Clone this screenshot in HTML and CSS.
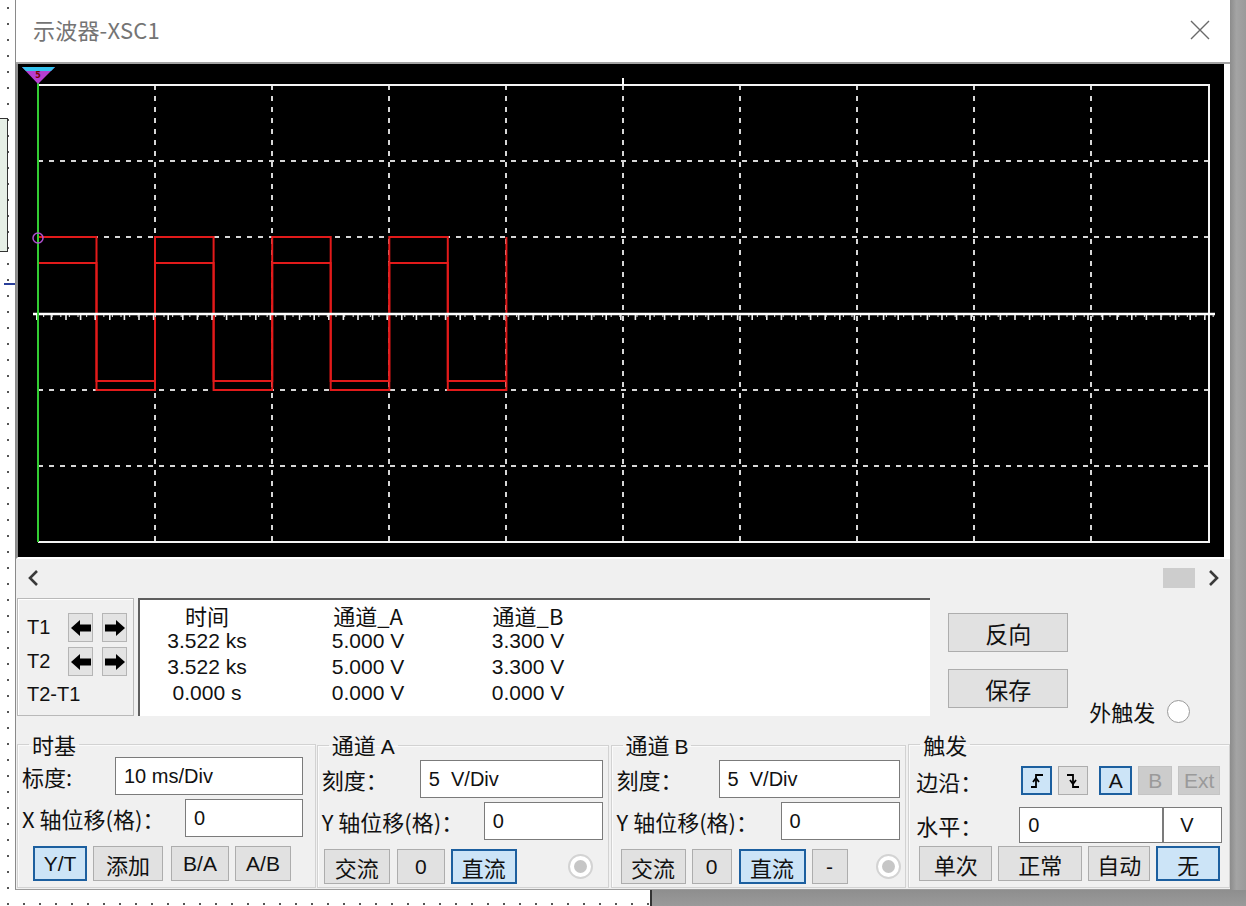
FILE: index.html
```html
<!DOCTYPE html>
<html lang="zh-CN">
<head>
<meta charset="utf-8">
<title>示波器-XSC1</title>
<link rel="stylesheet" href="styles.css">
</head>
<body>
<div class="desktop">
  <div class="left-strip">
    <div class="comp"></div>
    <div class="wire"></div>
  </div>
  <div class="window">
    <div class="titlebar">
      <span class="title">示波器-XSC1</span>
      <svg class="close" width="20" height="20" viewBox="0 0 20 20"><path d="M1 1 L19 19 M19 1 L1 19" stroke="#6a6a6a" stroke-width="1.4" fill="none"/></svg>
    </div>
    <div class="screen">
      <svg width="1206" height="493" viewBox="18 64 1206 493">
        <rect x="18" y="64" width="1206" height="493" fill="#000"/>
        <g stroke="#d6d6d6" stroke-width="2" stroke-dasharray="5 6" fill="none">
          <path d="M155 85 V542 M272 85 V542 M389 85 V542 M506 85 V542 M623 85 V542 M740 85 V542 M857 85 V542 M974 85 V542 M1091 85 V542"/>
          <path d="M38 161 H1209 M38 237 H1209 M38 390 H1209 M38 466 H1209"/>
        </g>
        <polyline points="38,85 1209,85 1209,542 38,542" stroke="#f4f4f4" stroke-width="2" fill="none"/>
        <path d="M623 78 V85" stroke="#fff" stroke-width="2"/>
        <g stroke="#e21a1a" stroke-width="2" fill="none">
          <path d="M38 237 H96.5 V390 H155 V237 H213.6 V390 H272.2 V237 H330.7 V390 H389.3 V237 H447.8 V390 H506.4 V237"/>
          <path d="M38 263 H96.5 V381 H155 V263 H213.6 V381 H272.2 V263 H330.7 V381 H389.3 V263 H447.8 V381 H506.4"/>
        </g>
        <path d="M33 314 H1215" stroke="#fff" stroke-width="2.4"/>
        <path d="M36 317.5 H1215" stroke="#ececec" stroke-width="5" stroke-dasharray="1.6 13"/>
        <path d="M43 316 H1215" stroke="#cfcfcf" stroke-width="2" stroke-dasharray="1.2 7.4"/>
        <path d="M38 78 V542" stroke="#33cc33" stroke-width="2"/>
        <circle cx="38" cy="238" r="5" stroke="#b050d0" stroke-width="1.5" fill="none"/>
        <polygon points="22,67 55,67 38,84" fill="#b63fd2"/>
        <polygon points="22,67 55,67 51,71 26,71" fill="#35c3ee"/>
        <text x="38" y="78" font-size="8" font-family="DejaVu Sans, sans-serif" font-weight="bold" fill="#7a0000" text-anchor="middle">5</text>
      </svg>
    </div>
    <div class="scrollrow">
      <svg class="chev-l" width="12" height="16" viewBox="0 0 12 16"><polyline points="10,1 3,8 10,15" stroke="#3a3a3a" stroke-width="2.6" fill="none"/></svg>
      <div class="thumb"></div>
      <svg class="chev-r" width="12" height="16" viewBox="0 0 12 16"><polyline points="2,1 9,8 2,15" stroke="#3a3a3a" stroke-width="2.6" fill="none"/></svg>
    </div>
    <div class="midrow">
      <div class="cursors">
        <div class="crow">
          <span class="clbl">T1</span>
          <div class="abtn"><svg width="20" height="16" viewBox="0 0 20 16"><polygon points="0,8 9,0 9,4.5 20,4.5 20,11.5 9,11.5 9,16" fill="#000"/></svg></div>
          <div class="abtn"><svg width="20" height="16" viewBox="0 0 20 16"><polygon points="20,8 11,0 11,4.5 0,4.5 0,11.5 11,11.5 11,16" fill="#000"/></svg></div>
        </div>
        <div class="crow crow2">
          <span class="clbl">T2</span>
          <div class="abtn"><svg width="20" height="16" viewBox="0 0 20 16"><polygon points="0,8 9,0 9,4.5 20,4.5 20,11.5 9,11.5 9,16" fill="#000"/></svg></div>
          <div class="abtn"><svg width="20" height="16" viewBox="0 0 20 16"><polygon points="20,8 11,0 11,4.5 0,4.5 0,11.5 11,11.5 11,16" fill="#000"/></svg></div>
        </div>
        <div class="crow crow3"><span class="clbl wide">T2-T1</span></div>
      </div>
      <div class="readings">
        <div class="rgrid">
          <div class="rh">时间</div><div class="rh">通道_A</div><div class="rh">通道_B</div>
          <div class="rv">3.522 ks</div><div class="rv">5.000 V</div><div class="rv">3.300 V</div>
          <div class="rv">3.522 ks</div><div class="rv">5.000 V</div><div class="rv">3.300 V</div>
          <div class="rv">0.000 s</div><div class="rv">0.000 V</div><div class="rv">0.000 V</div>
        </div>
      </div>
      <div class="actions">
        <div class="btn big">反向</div>
        <div class="arow">
          <div class="btn big">保存</div>
          <div class="ext"><span>外触发</span><span class="radio-w"></span></div>
        </div>
      </div>
    </div>
    <div class="groups">
      <fieldset class="fs fs1">
        <legend>时基</legend>
        <div class="row"><span class="lbl l1a">标度:</span><div class="inp i1a">10 ms/Div</div></div>
        <div class="row row2"><span class="lbl l1b">X 轴位移(格)：</span><div class="inp i1b">0</div></div>
        <div class="brow b1">
          <div class="btn sel w-yt lat">Y/T</div>
          <div class="btn w-add">添加</div>
          <div class="btn w-ba lat">B/A</div>
          <div class="btn w-ab lat">A/B</div>
        </div>
      </fieldset>
      <fieldset class="fs fs2">
        <legend>通道 <span class="lg-lat">A</span></legend>
        <div class="row"><span class="lbl l2a">刻度：</span><div class="inp i2a">5  V/Div</div></div>
        <div class="row row2"><span class="lbl l2b">Y 轴位移(格)：</span><div class="inp i2b">0</div></div>
        <div class="brow b2">
          <div class="btn w-ac">交流</div>
          <div class="btn w-z2 lat">0</div>
          <div class="btn sel w-dc">直流</div>
          <span class="radio-d rd2"><span class="dot"></span></span>
        </div>
      </fieldset>
      <fieldset class="fs fs3">
        <legend>通道 <span class="lg-lat">B</span></legend>
        <div class="row"><span class="lbl l3a">刻度：</span><div class="inp i3a">5  V/Div</div></div>
        <div class="row row2"><span class="lbl l3b">Y 轴位移(格)：</span><div class="inp i3b">0</div></div>
        <div class="brow b3">
          <div class="btn w-ac3">交流</div>
          <div class="btn w-z3 lat">0</div>
          <div class="btn sel w-dc3">直流</div>
          <div class="btn w-mn lat">-</div>
          <span class="radio-d rd3"><span class="dot"></span></span>
        </div>
      </fieldset>
      <fieldset class="fs fs4">
        <legend>触发</legend>
        <div class="trow1">
          <span class="lbl l4a">边沿：</span>
          <div class="btn sel e-r"><svg width="16" height="18" viewBox="0 0 16 18"><polyline points="2,15 7,15 7,3 14,3" stroke="#000" stroke-width="1.8" fill="none"/><polyline points="4,10 7,6 10,10" stroke="#000" stroke-width="1.8" fill="none"/></svg></div>
          <div class="btn e-f"><svg width="16" height="18" viewBox="0 0 16 18"><polyline points="2,3 8,3 8,15 14,15" stroke="#000" stroke-width="1.8" fill="none"/><polyline points="5,8 8,12 11,8" stroke="#000" stroke-width="1.8" fill="none"/></svg></div>
          <div class="btn sel e-a lat">A</div>
          <div class="btn dis e-b lat">B</div>
          <div class="btn dis e-x lat">Ext</div>
        </div>
        <div class="trow2">
          <span class="lbl l4b">水平：</span>
          <div class="inp i4">0</div>
          <div class="inp i4v">V</div>
        </div>
        <div class="brow b4">
          <div class="btn w-sg">单次</div>
          <div class="btn w-nm">正常</div>
          <div class="btn w-au">自动</div>
          <div class="btn sel w-no">无</div>
        </div>
      </fieldset>
    </div>
  </div>
  <div class="shadow-right"></div>
</div>
<div class="bottom-strip">
  <div class="bdots"></div>
  <div class="bshadow"></div>
</div>
</body>
</html>
```

FILE: styles.css
```css
* { box-sizing: border-box; }
html, body { margin: 0; padding: 0; }
body {
  width: 1246px;
  height: 906px;
  overflow: hidden;
  background-color: #fff;
  background-image: radial-gradient(circle, #555 0.9px, transparent 1.4px);
  background-size: 16px 16px;
  font-family: "Noto Sans CJK SC", "Liberation Sans", sans-serif;
  color: #111;
}
.desktop { display: flex; height: 890px; }
.left-strip { width: 15px; flex: none; }
.comp {
  margin-top: 118px;
  width: 8px;
  height: 134px;
  border: 1px solid #333;
  border-left: none;
  background: #e6efe6;
}
.wire { margin-top: 31px; margin-left: 4px; width: 11px; height: 2px; background: #2a3f9a; }

.window {
  width: 1215px;
  height: 890px;
  flex: none;
  background: #f0f0f0;
  border-left: 1px solid #8a8a8a;
  border-bottom: 1px solid #9c9c9c;
  display: flex;
  flex-direction: column;
}
.titlebar {
  height: 64px;
  flex: none;
  background: #fff;
  border-bottom: 2px solid #a3a3a3;
  display: flex;
  align-items: center;
  justify-content: space-between;
  padding: 0 20px 4px 17px;
}
.title { font-size: 22px; color: #747474; letter-spacing: 0.2px; }
.close { display: block; margin-top: 2px; }

.screen {
  height: 495px;
  flex: none;
  border-left: 2px solid #8f8f8f;
  border-right: 6px solid #fff;
  border-bottom: 2px solid #fff;
  background: #000;
}
.screen svg { display: block; }

.scrollrow {
  height: 37px;
  flex: none;
  display: flex;
  align-items: center;
  padding-left: 11px;
}
.thumb { margin-left: 1124px; width: 32px; height: 20px; background: #cdcdcd; }
.chev-r { margin-left: 13px; }

.midrow { height: 120px; flex: none; display: flex; padding-top: 2px; }
.cursors {
  margin-left: 1px;
  width: 117px;
  height: 118px;
  border: 1px solid #b9b9b9;
  box-shadow: inset 1px 1px 0 #fff;
  padding: 14px 0 0 9px;
  font-family: "Liberation Sans", sans-serif;
}
.crow { display: flex; align-items: center; height: 29px; }
.crow2 { margin-top: 5px; }
.crow3 { margin-top: 6px; height: 24px; }
.clbl { width: 41px; font-size: 20px; color: #111; white-space: nowrap; flex: none; }
.clbl.wide { width: auto; }
.abtn {
  width: 25px;
  height: 29px;
  background: #e3e3e3;
  border: 1px solid #b5b5b5;
  display: flex;
  align-items: center;
  justify-content: center;
  margin-right: 9px;
  flex: none;
}
.abtn svg { display: block; }

.readings {
  margin-left: 4px;
  width: 793px;
  height: 118px;
  background: #fff;
  border-top: 2px solid #5e5e5e;
  border-left: 2px solid #5e5e5e;
  padding: 2px 0 0 1px;
}
.rgrid {
  display: grid;
  grid-template-columns: 132px 130px 130px;
  column-gap: 30px;
  grid-auto-rows: 26px;
}
.rh { font-size: 22px; line-height: 26px; text-align: center; color: #111; }
.rv { font-family: "Liberation Sans", sans-serif; font-size: 21px; line-height: 26px; text-align: center; color: #111; }

.actions { width: 300px; padding-left: 18px; padding-top: 15px; }
.btn {
  display: flex;
  align-items: center;
  justify-content: center;
  background: #e1e1e1;
  border: 1px solid #adadad;
  font-size: 22px;
  color: #111;
  flex: none;
}
.btn.lat { font-family: "Liberation Sans", sans-serif; font-size: 21px; }
.btn.sel { background: #cce4f7; border: 2px solid #1c5f9f; }
.btn.dis { background: #cccccc; border-color: #c4c4c4; color: #9a9a9a; }
.big { width: 120px; height: 39px; font-size: 23px; }
.arow { display: flex; margin-top: 17px; }
.ext { display: flex; align-items: center; margin-left: 21px; margin-top: 29px; height: 26px; font-size: 22px; }
.radio-w { width: 23px; height: 23px; border-radius: 50%; border: 1px solid #9a9a9a; background: #fff; margin-left: 12px; }

.groups { display: flex; margin-top: 15px; height: 157px; flex: none; }
.fs {
  margin: 0;
  padding: 0;
  min-width: 0;
  height: 157px;
  border: 1px solid #d2d2d2;
  box-shadow: inset 1px 1px 0 #fafafa;
}
.fs legend { font-size: 22px; line-height: 26px; padding: 0 3px; margin-left: 11px; color: #111; }
.lg-lat { font-family: "Liberation Sans", sans-serif; font-size: 21px; }
.fs1 { margin-left: 1px; width: 299px; }
.fs2 { margin-left: 1px; width: 292px; }
.fs3 { margin-left: 2px; width: 296px; }
.fs4 { margin-left: 2px; width: 322px; }

.row { display: flex; align-items: center; height: 38px; }
.row2 { margin-top: 4px; }
.lbl { font-size: 22px; flex: none; white-space: nowrap; padding-left: 4px; color: #111; }
.inp {
  height: 38px;
  background: #fff;
  border: 1px solid #7b7b7b;
  font-family: "Liberation Sans", sans-serif;
  font-size: 20px;
  padding-left: 8px;
  display: flex;
  align-items: center;
  white-space: pre;
  flex: none;
  color: #111;
}
.l1a { width: 97px; } .i1a { width: 188px; }
.l1b { width: 167px; } .i1b { width: 118px; }
.l2a { width: 102px; } .i2a { width: 183px; }
.l2b { width: 166px; } .i2b { width: 119px; }
.l3a { width: 107px; padding-left: 5px; } .i3a { width: 181px; }
.l3b { width: 169px; padding-left: 5px; } .i3b { width: 119px; }

.brow { display: flex; align-items: center; height: 35px; margin-top: 9px; gap: 6px; }
.brow .btn { height: 35px; }
.b1 { padding-left: 15px; }
.b2 { padding-left: 6px; }
.b3 { padding-left: 9px; }
.b4 { padding-left: 10px; margin-top: 3px; }
.w-yt { width: 54px; } .w-add { width: 70px; } .w-ba { width: 58px; margin-left: 2px; } .w-ab { width: 56px; }
.w-ac { width: 66px; } .w-z2 { width: 48px; margin-left: 1px; } .w-dc { width: 66px; }
.w-ac3 { width: 65px; } .w-z3 { width: 40px; } .w-dc3 { width: 67px; margin-left: 1px; } .w-mn { width: 36px; }
.w-sg { width: 73px; } .w-nm { width: 84px; } .w-au { width: 62px; } .w-no { width: 64px; }

.radio-d {
  width: 25px;
  height: 25px;
  border-radius: 50%;
  border: 2px solid #d3d3d3;
  background: #fff;
  display: flex;
  align-items: center;
  justify-content: center;
  flex: none;
}
.radio-d .dot { width: 13px; height: 13px; border-radius: 50%; background: #c6c6c6; }
.rd2 { margin-left: 45px; }
.rd3 { margin-left: 22px; }

.trow1 { display: flex; align-items: center; height: 29px; margin-top: 9px; gap: 6px; }
.trow1 .btn { height: 29px; }
.l4a { width: 106px; padding-left: 7px; }
.e-r { width: 31px; } .e-f { width: 30px; }
.e-a { width: 33px; margin-left: 5px; } .e-b { width: 34px; } .e-x { width: 42px; }
.trow2 { display: flex; align-items: center; height: 36px; margin-top: 12px; }
.l4b { width: 110px; padding-left: 7px; }
.i4 { width: 144px; height: 36px; }
.i4v { width: 59px; height: 36px; padding-left: 16px; border-left: 1px solid #7b7b7b; }

.shadow-right { width: 16px; flex: none; background: linear-gradient(to right, #8c8c8c, #a4a4a4 40%, #9a9a9a); }
.bottom-strip { display: flex; height: 16px; }
.bdots { width: 652px; flex: none; border-right: 2px solid #333; }
.bshadow { flex: 1; background: linear-gradient(to bottom, #8e8e8e, #9a9a9a); }
```
